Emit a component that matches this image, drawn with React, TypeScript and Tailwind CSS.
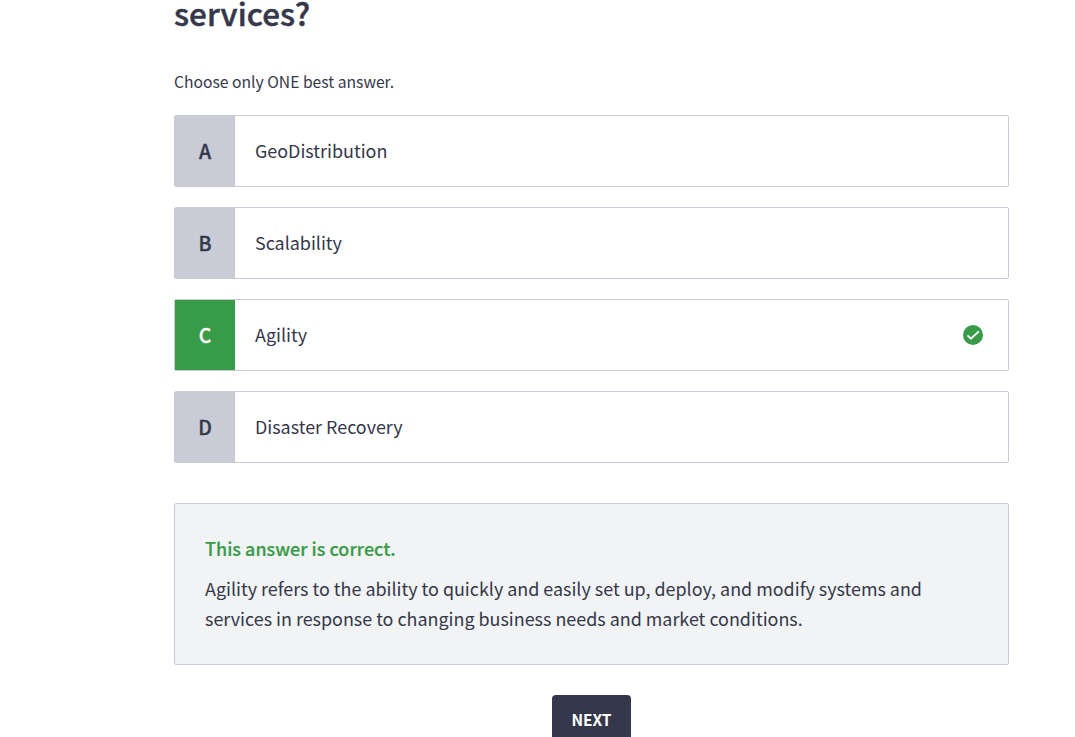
const answers = [
  { letter: 'A', text: 'GeoDistribution', correct: false },
  { letter: 'B', text: 'Scalability', correct: false },
  { letter: 'C', text: 'Agility', correct: true },
  { letter: 'D', text: 'Disaster Recovery', correct: false },
];

function CheckBadge() {
  return (
    <svg width="20" height="20" viewBox="0 0 20 20" className="shrink-0">
      <circle cx="10" cy="10" r="10" fill="#389b48" />
      <path d="M4.5 10.4 7.9 13.8 15.8 6.4" fill="none" stroke="#fff" strokeWidth="1.9" />
    </svg>
  );
}

export default function App() {
  return (
    <main className="h-[737px] overflow-hidden bg-white pl-[174px] pr-[66px] font-['Noto_Sans_CJK_SC',sans-serif] text-[#35374a]">
      <h1 className="h-[30px] text-[31.3px] leading-[26px] font-medium tracking-[0.1px] [-webkit-text-stroke:0.5px_#35374a]">services?</h1>
      <p className="mt-[37px] text-[15.68px] leading-[30px]">Choose only ONE best answer.</p>
      <ul className="mt-[18px] flex flex-col gap-5">
        {answers.map((a) => (
          <li key={a.letter} className="flex h-[72px] items-stretch rounded-[2px] border border-[#c9ccd6] text-[17.91px]">
            <span className={a.correct ? 'flex w-[60px] items-center justify-center bg-[#389b48] pb-px text-[19.5px] font-medium text-white [-webkit-text-stroke:0.35px_#fff]' : 'flex w-[60px] items-center justify-center bg-[#c9ccd6] pb-px text-[19.5px] font-medium [-webkit-text-stroke:0.35px_#35374a]'}>
              {a.letter}
            </span>
            <span className="flex flex-1 items-center pb-0.5 pl-5">{a.text}</span>
            {a.correct && <span className="flex items-center pr-[25px]"><CheckBadge /></span>}
          </li>
        ))}
      </ul>
      <section className="mt-10 h-[162px] rounded-[2px] border border-[#c9ccd6] bg-[#f1f3f5] px-[30px] pt-[29px] text-[17.91px] leading-[30px]">
        <h2 className="font-medium tracking-[0.04px] text-[#389b48] [-webkit-text-stroke:0.2px_#389b48]">This answer is correct.</h2>
        <p className="mt-[10px]">Agility refers to the ability to quickly and easily set up, deploy, and modify systems and<br />services in response to changing business needs and market conditions.</p>
      </section>
      <div className="mt-[30px] flex justify-center">
        <button className="h-[50px] w-[79px] rounded-[4px] bg-[#35374a] text-[15.5px] font-bold tracking-[-0.1px] text-white">NEXT</button>
      </div>
    </main>
  );
}
